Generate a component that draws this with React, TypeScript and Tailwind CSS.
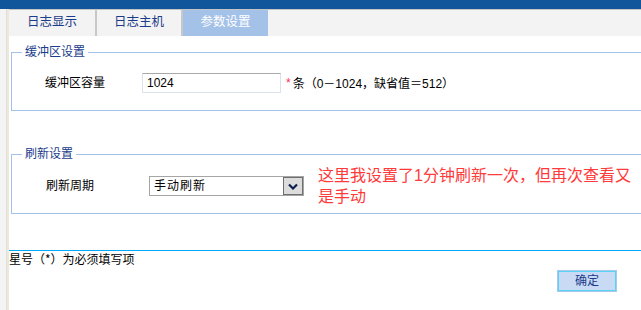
import React from "react";

const font = { fontFamily: '"Liberation Sans", "Noto Sans CJK SC", sans-serif' };
const cjk = { fontFamily: '"Noto Sans CJK SC", sans-serif' };

function Chevron() {
  return (
    <svg width="10" height="7" viewBox="0 0 10 7">
      <path d="M1 1.5 L5 5.5 L9 1.5" fill="none" stroke="#0b1f4d" strokeWidth="2.2" />
    </svg>
  );
}

export default function App() {
  return (
    <div
      className="w-[641px] h-[310px] overflow-hidden bg-white flex flex-col text-[12px] leading-[14px] text-black"
      style={font}
    >
      <div className="h-[9px] bg-[#11569b] shrink-0" />
      <div className="flex flex-1 min-h-0">
        <div className="flex w-[9px] shrink-0">
          <div className="w-[7px] bg-[#f4f4f4] border-r border-[#dedede]" />
          <div className="w-[2px] bg-[#ece9d8]" />
        </div>
        <div className="flex-1 min-w-0 flex flex-col">
          <div className="h-[241px] shrink-0 overflow-hidden flex flex-col">
            <div className="h-[27px] shrink-0 bg-[#f3f3f3] border-t border-[#c4c4c4] flex text-[12.5px] text-[#1b3c8a]">
              <div className="w-[86px] flex items-center justify-center pb-[2px]">日志显示</div>
              <div className="w-[2px] bg-[#c8c8c8]" />
              <div className="w-[84px] flex items-center justify-center pb-[2px]">日志主机</div>
              <div className="w-[2px] bg-[#c8c8c8]" />
              <div className="w-[85px] flex items-center justify-center pb-[2px] bg-[#a4c1e8] text-white">参数设置</div>
            </div>

            <fieldset className="shrink-0 ml-[2px] mt-[9px] w-[700px] border border-[#a3c2ea] pl-[10px] pt-[14px] pb-[17px]">
              <legend className="h-[14px] px-[3px] text-[#1b3c8a] text-[12px] leading-[14px]">缓冲区设置</legend>
              <div className="flex items-center h-[20px] overflow-hidden">
                <div className="ml-[23px] w-[97px]">缓冲区容量</div>
                <div className="w-[139px] h-[20px] border border-[#dbe2ec] border-t-[#a9a9a9] flex items-center pl-[4px] text-[12px]">
                  1024
                </div>
                <span className="ml-[5px] text-[#ff2d55]">*</span>
                <span className="ml-[2px]">
                  <span style={cjk}>条（</span>0－1024<span style={cjk}>，缺省值＝</span>512<span style={cjk}>）</span>
                </span>
              </div>
            </fieldset>

            <fieldset className="shrink-0 ml-[2px] mt-[36px] w-[700px] border border-[#a3c2ea] pl-[10px] pt-[4px] pb-[6px]">
              <legend className="h-[14px] px-[3px] text-[#1b3c8a] text-[12px] leading-[14px]">刷新设置</legend>
              <div className="flex items-center h-[42px]">
                <div className="ml-[24px] w-[103px]">刷新周期</div>
                <div className="w-[155px] h-[20px] border border-[#a5a5a5] flex items-center">
                  <span className="flex-1 pl-[4px] tracking-[1px]">手动刷新</span>
                  <div className="w-[20px] h-[18px] bg-[#dcdcdc] border border-[#6f6f6f] flex items-center justify-center">
                    <Chevron />
                  </div>
                </div>
                <div className="ml-[14px] w-[320px] text-[16px] leading-[21px] text-[#ff3a3a]">
                  这里我设置了1分钟刷新一次，但再次查看又是手动
                </div>
              </div>
            </fieldset>
          </div>

          <div className="shrink-0 h-[1px] bg-[#00aaff]" />
          <div className="shrink-0 mt-[1px] h-[14px]" style={cjk}>星号（*）为必须填写项</div>
          <div className="shrink-0 flex justify-end pr-[24px] mt-[4px]">
            <div className="w-[60px] h-[22px] border border-[#a9c8ec] bg-[#c9daf4] flex">
              <div className="flex-1 border border-[#5ad3f3] flex items-center justify-center text-[12px] text-[#1b3c8a]">
                确定
              </div>
            </div>
          </div>
        </div>
      </div>
    </div>
  );
}
